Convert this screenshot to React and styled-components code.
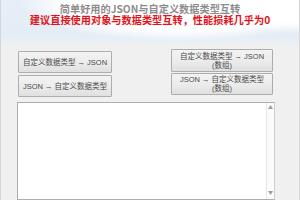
import styled, { createGlobalStyle } from 'styled-components';

const GlobalStyle = createGlobalStyle`
    html, body {
        margin: 0;
        padding: 0;
        background: #f0f0f0;
    }
    * {
        box-sizing: border-box;
    }
`;

const Window = styled.div`
    display: flex;
    flex-direction: column;
    width: 300px;
    height: 200px;
    overflow: hidden;
    background: #f0f0f0;
    border-left: 1px solid #d6d6d6;
    border-right: 1px solid #d6d6d6;
    font-family: "Noto Sans CJK SC", "Liberation Sans", sans-serif;
`;

const Header = styled.header`
    display: flex;
    flex-direction: column;
    align-items: center;
    height: 45px;
    padding-top: 3px;
    background:
        radial-gradient(ellipse 160px 40px at 60% 2px, #ffffff 72%, rgba(255, 255, 255, 0) 100%),
        radial-gradient(ellipse 80px 34px at 100% 0, #ffffff 65%, rgba(255, 255, 255, 0) 100%),
        linear-gradient(to bottom, #e6eef8 0%, #e4ecf5 80%, #ecf0f4 100%);

    .header__title {
        margin: 0;
        font-size: 10.2px;
        line-height: 11px;
        font-weight: 700;
        color: #8d8d8d;
        text-shadow: 0 0 1px #fff;
    }

    .header__note {
        margin: 0;
        font-size: 10.2px;
        line-height: 11px;
        font-weight: 700;
        color: #e0141c;
    }
`;

const Controls = styled.div`
    display: flex;
    justify-content: space-between;
    align-items: flex-start;
    padding: 5px 26px 0 17px;
    height: 58px;
`;

const ButtonColumn = styled.div`
    display: flex;
    flex-direction: column;
    gap: ${({ $gap }) => $gap}px;
    width: ${({ $width }) => $width}px;
    margin-top: ${({ $offset }) => $offset}px;
`;

const Button = styled.button`
    display: flex;
    flex-direction: column;
    align-items: center;
    justify-content: center;
    height: ${({ $height }) => $height}px;
    padding: 0;
    border: 1px solid #adadad;
    border-radius: 1px;
    background: linear-gradient(to bottom, #f3f3f3 0%, #ececec 50%, #e0e0e0 100%);
    color: #4a4a4a;
    font-family: "Liberation Sans", "Noto Sans CJK SC", sans-serif;
    font-size: 7.5px;
    line-height: 9px;
    white-space: nowrap;

    span + span {
        margin-top: 0;
    }
`;

const Output = styled.div`
    display: flex;
    margin-left: 16px;
    width: 258px;
    height: 100px;
    background: #ffffff;
    border: 1px solid #adadad;
    border-right-color: #cfcfcf;
`;

const OutputText = styled.textarea`
    flex: 1;
    border: none;
    outline: none;
    resize: none;
    overflow: hidden;
    background: transparent;
    font-family: "Noto Sans CJK SC", "Liberation Sans", sans-serif;
    font-size: 8px;
`;

const ScrollBar = styled.div`
    display: flex;
    flex-direction: column;
    justify-content: space-between;
    align-items: center;
    width: 8px;
    padding: 1px 0 4px;
    background: #fbfbfb;
    border-left: 1px solid #e6e6e6;
    color: #9a9a9a;
    font-size: 5px;
    line-height: 6px;
`;

const App = () => {
    return (
        <>
            <GlobalStyle />
            <Window>
                <Header>
                    <h1 className="header__title">简单好用的JSON与自定义数据类型互转</h1>
                    <p className="header__note">建议直接使用对象与数据类型互转，性能损耗几乎为0</p>
                </Header>
                <Controls>
                    <ButtonColumn $width={94} $gap={2} $offset={2}>
                        <Button $height={22}><span>自定义数据类型 → JSON</span></Button>
                        <Button $height={22}><span>JSON → 自定义数据类型</span></Button>
                    </ButtonColumn>
                    <ButtonColumn $width={102} $gap={1} $offset={0}>
                        <Button $height={23}>
                            <span>自定义数据类型 → JSON</span>
                            <span>(数组)</span>
                        </Button>
                        <Button $height={22}>
                            <span>JSON → 自定义数据类型</span>
                            <span>(数组)</span>
                        </Button>
                    </ButtonColumn>
                </Controls>
                <Output>
                    <OutputText defaultValue="" />
                    <ScrollBar>
                        <span>▲</span>
                        <span>▼</span>
                    </ScrollBar>
                </Output>
            </Window>
        </>
    );
};

export default App;
